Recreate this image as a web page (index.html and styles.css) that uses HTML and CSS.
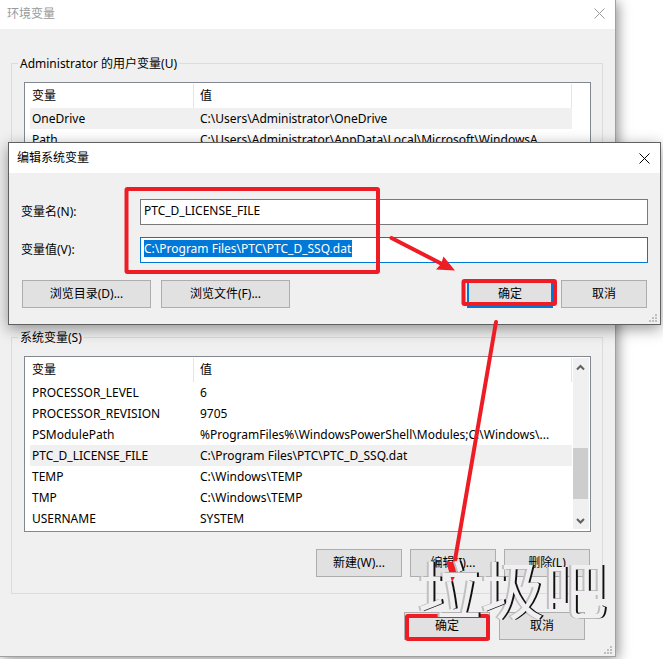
FILE: index.html
```html
<!DOCTYPE html>
<html lang="zh-CN">
<head>
<meta charset="utf-8">
<title>环境变量</title>
<link rel="stylesheet" href="styles.css">
</head>
<body>
<main class="window">
  <header class="titlebar">
    <h1 class="title">环境变量</h1>
    <button class="close" type="button" aria-label="关闭"><svg width="11" height="11" viewBox="0 0 11 11"><path d="M.5 .5l10 10M10.5 .5l-10 10"/></svg></button>
  </header>
  <div class="content">
    <fieldset class="group group-user">
      <legend>Administrator 的用户变量(U)</legend>
      <div class="list">
        <table class="vars">
          <colgroup><col class="col-name"><col></colgroup>
          <thead><tr><th>变量</th><th>值</th></tr></thead>
          <tbody>
            <tr class="selected"><td>OneDrive</td><td>C:\Users\Administrator\OneDrive</td></tr>
            <tr><td>Path</td><td>C:\Users\Administrator\AppData\Local\Microsoft\WindowsA...</td></tr>
          </tbody>
        </table>
        <div class="gutter"></div>
      </div>
    </fieldset>
    <fieldset class="group">
      <legend>系统变量(S)</legend>
      <div class="list">
        <table class="vars">
          <colgroup><col class="col-name"><col></colgroup>
          <thead><tr><th>变量</th><th>值</th></tr></thead>
          <tbody>
            <tr><td>PROCESSOR_LEVEL</td><td>6</td></tr>
            <tr><td>PROCESSOR_REVISION</td><td>9705</td></tr>
            <tr><td>PSModulePath</td><td>%ProgramFiles%\WindowsPowerShell\Modules;C:\Windows\...</td></tr>
            <tr class="selected"><td>PTC_D_LICENSE_FILE</td><td>C:\Program Files\PTC\PTC_D_SSQ.dat</td></tr>
            <tr><td>TEMP</td><td>C:\Windows\TEMP</td></tr>
            <tr><td>TMP</td><td>C:\Windows\TEMP</td></tr>
            <tr><td>USERNAME</td><td>SYSTEM</td></tr>
          </tbody>
        </table>
        <div class="gutter scrollbar">
          <svg width="16" height="17" viewBox="0 0 16 17"><path d="M4 11.500l3.500-3.500 3.500 3.500"/></svg>
          <div class="track"><div class="thumb"></div></div>
          <svg width="16" height="17" viewBox="0 0 16 17"><path d="M4 7l3.500 3.500 3.500-3.500"/></svg>
        </div>
      </div>
      <div class="actions">
        <button class="btn" type="button">新建(W)...</button>
        <button class="btn" type="button">编辑(I)...</button>
        <button class="btn" type="button">删除(L)</button>
      </div>
    </fieldset>
    <footer class="footer">
      <button class="btn" type="button">确定</button>
      <button class="btn" type="button">取消</button>
    </footer>
  </div>
  <svg class="grip" width="8" height="8" viewBox="0 0 8 8"><path d="M6 0h2v2H6zM3 3h2v2H3zM6 3h2v2H6zM0 6h2v2H0zM3 6h2v2H3zM6 6h2v2H6z"/></svg>
</main>

<form class="dialog">
  <header class="titlebar">
    <h2 class="title">编辑系统变量</h2>
    <button class="close" type="button" aria-label="关闭"><svg width="11" height="11" viewBox="0 0 11 11"><path d="M.5 .5l10 10M10.5 .5l-10 10"/></svg></button>
  </header>
  <div class="fields">
    <label for="var-name">变量名(N):</label>
    <input id="var-name" class="field" type="text" value="PTC_D_LICENSE_FILE">
    <label for="var-value">变量值(V):</label>
    <input id="var-value" class="field selected-text" type="text" value="C:\Program Files\PTC\PTC_D_SSQ.dat">
  </div>
  <div class="dialog-actions">
    <button class="btn wide" type="button">浏览目录(D)...</button>
    <button class="btn wide" type="button">浏览文件(F)...</button>
    <span class="spacer"></span>
    <button class="btn default" type="button">确定</button>
    <button class="btn" type="button">取消</button>
  </div>
  <svg class="grip" width="8" height="8" viewBox="0 0 8 8"><path d="M6 0h2v2H6zM3 3h2v2H3zM6 3h2v2H6zM0 6h2v2H0zM3 6h2v2H3zM6 6h2v2H6z"/></svg>
</form>

<svg class="marks" width="663" height="659" viewBox="0 0 663 659" aria-hidden="true">
  <g class="mark-line">
    <rect x="126.500" y="189" width="251.500" height="83" rx="1"/>
    <rect x="463.500" y="281" width="91.500" height="23" rx="1"/>
    <rect x="407" y="616" width="81" height="23" rx="1"/>
    <path d="M391.500 238L442 264"/>
    <path d="M496 322L454 566"/>
  </g>
  <path class="mark-head" d="M443.500 256.500L455 270.500L436 269.500L441 264ZM446 561L452 582L462 564Z"/>
</svg>
<div class="watermark">垃圾吧</div>
</body>
</html>
```

FILE: styles.css
```css
* {
  box-sizing: border-box;
}

body {
  margin: 0;
  position: relative;
  overflow: hidden;
  background: #fff;
  color: #000;
  font: 12px/16px "Noto Sans", "Noto Sans CJK SC", sans-serif;
}

button,
input {
  font: inherit;
  color: inherit;
}

.window {
  position: relative;
  margin-right: 47px;
  margin-bottom: 2px;
  background: #f0f0f0;
  border: solid #a0a0a0;
  border-width: 0 1px 1px 0;
  box-shadow: 2px 2px 12px rgba(0, 0, 0, 0.45);
}

.titlebar {
  display: flex;
  align-items: center;
  justify-content: space-between;
  height: 29px;
  padding: 0 10px 2px 7px;
  background: #fff;
}

.title {
  margin: 0;
  font-size: 12px;
  font-weight: 400;
}

.window .titlebar {
  color: #999;
}

.close {
  display: flex;
  padding: 0;
  border: 0;
  background: none;
}

.close svg {
  fill: none;
  stroke: currentColor;
}

.content {
  padding: 25px 12px 16px 11px;
}

.group {
  min-width: 0;
  margin: 0;
  padding: 10px 11px 16px 12px;
  border: 1px solid #dcdcdc;
}

.group-user {
  min-height: 266px;
  margin-bottom: 8px;
}

.group legend {
  margin-left: -6px;
  padding: 2px 2px 0;
}

.list {
  display: flex;
  padding: 1px 1px 2px 5px;
  background: #fff;
  border: 1px solid #828790;
}

.group-user .list {
  min-height: 176px;
}

.vars {
  flex: 1;
  align-self: flex-start;
  table-layout: fixed;
  width: 0;
  border-collapse: collapse;
}

.col-name {
  width: 164px;
}

.vars th,
.vars td {
  padding: 0 2px;
  overflow: hidden;
  font-weight: 400;
  text-align: left;
  white-space: nowrap;
}

.vars th {
  height: 24px;
  background: linear-gradient(#e5e5e5, #e5e5e5) right / 1px 100% no-repeat;
}

.vars td {
  height: 21px;
}

.vars th + th,
.vars td + td {
  padding-left: 6px;
}

.selected {
  background: #f0f0f0;
}

.gutter {
  width: 17px;
}

.scrollbar {
  display: flex;
  flex-direction: column;
  border-left: 1px solid #fff;
  background: #f0f0f0;
}

.scrollbar svg {
  fill: none;
  stroke: #606060;
  stroke-width: 2;
}

.track {
  display: flex;
  flex: 1;
  flex-direction: column;
  justify-content: flex-end;
  padding-bottom: 13px;
}

.thumb {
  height: 51px;
  margin-right: 1px;
  background: #cdcdcd;
}

.actions,
.footer {
  display: flex;
  justify-content: flex-end;
}

.actions {
  gap: 8px;
  padding: 17px 1px 0 0;
}

.footer {
  gap: 9px;
  padding: 18px 18px 0 0;
}

.btn {
  width: 86px;
  height: 28px;
  padding: 0;
  border: 1px solid #adadad;
  background: #e1e1e1;
}

.btn.wide {
  width: 129px;
}

.btn.default {
  border: 2px solid #0078d7;
}

.grip {
  position: absolute;
  right: 3px;
  bottom: 2px;
  fill: #bfbfbf;
}

.dialog {
  position: absolute;
  top: 142px;
  left: 8px;
  right: 2px;
  background: #f0f0f0;
  border: 1px solid #606060;
  box-shadow: 0 4px 14px rgba(0, 0, 0, 0.4);
}

.dialog .titlebar {
  height: 30px;
  padding: 0 10px 0 8px;
}

.fields {
  display: grid;
  grid-template-columns: 119px 1fr;
  row-gap: 12px;
  align-items: center;
  padding: 26px 12px 0;
}

.field {
  width: 100%;
  height: 26px;
  padding: 0 3px 3px;
  border: 1px solid #7a7a7a;
  background: #fff;
  outline: 0;
}

.selected-text {
  border-color: #0078d7;
  background: linear-gradient(#0078d7, #0078d7) 3px 2px / 208px 17px no-repeat #fff;
  color: #fff;
}

.dialog-actions {
  display: flex;
  gap: 8px;
  padding: 17px 13px 16px;
}

.wide + .wide {
  margin-left: 2px;
}

.spacer {
  flex: 1;
}

.marks {
  position: absolute;
  top: 0;
  left: 0;
  pointer-events: none;
}

.mark-line {
  fill: none;
  stroke: #ee1c24;
  stroke-width: 4;
  stroke-linecap: round;
}

.mark-head {
  fill: #ee1c24;
}

.watermark {
  position: absolute;
  left: 418px;
  top: 552px;
  color: #f1eff1;
  font: 63px/70px "Noto Sans CJK SC", sans-serif;
  text-shadow: 2px 0 0 #111, -2px 0 0 #c0c0c0;
  white-space: nowrap;
  pointer-events: none;
}
```
